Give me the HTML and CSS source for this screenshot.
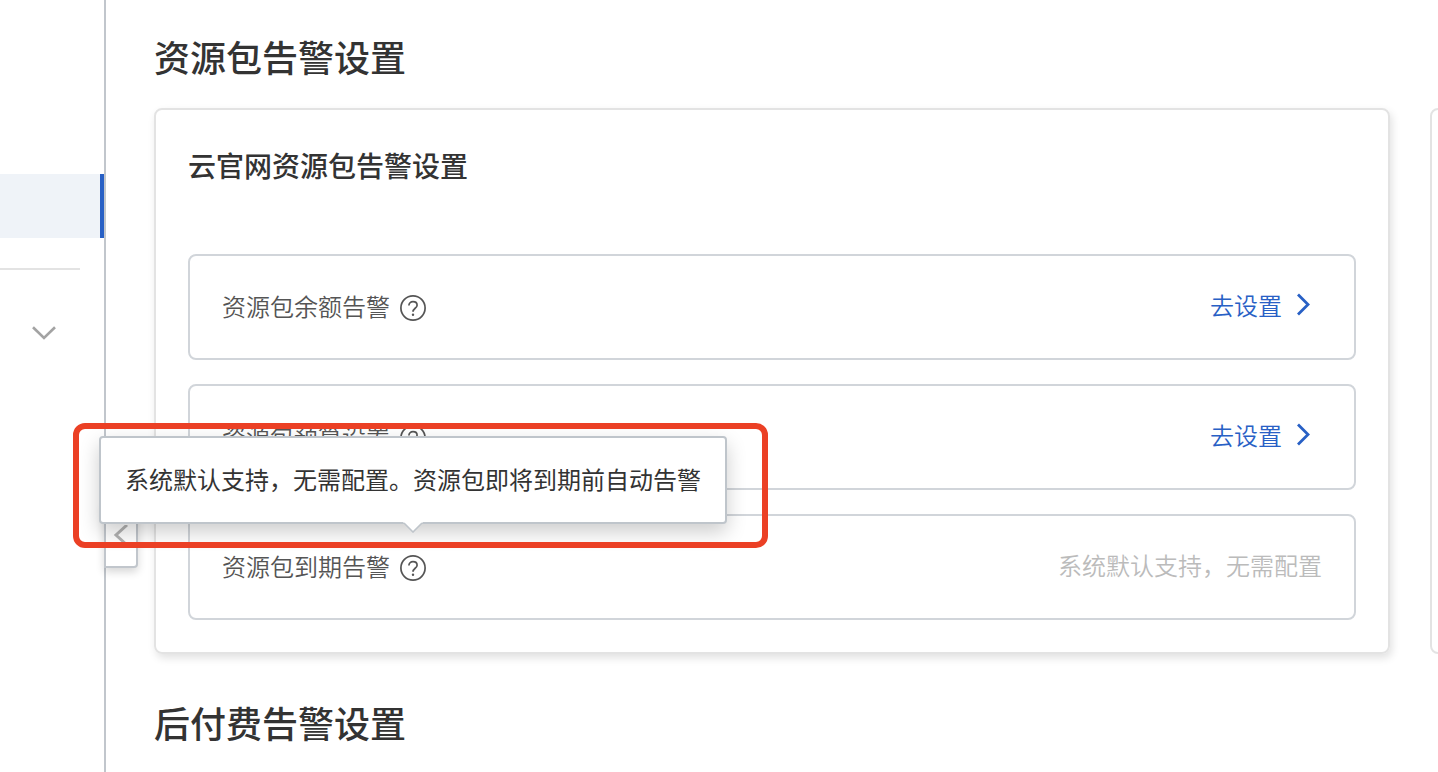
FILE: index.html
```
<!DOCTYPE html>
<html lang="zh-CN">
<head>
<meta charset="utf-8">
<meta name="viewport" content="width=device-width, initial-scale=1">
<title>资源包告警设置</title>
<link rel="stylesheet" href="styles.css">
</head>
<body>
<div class="app">
  <aside class="sidebar">
    <div class="menu-active"></div>
    <hr class="menu-divider">
    <button class="menu-toggle" type="button" aria-label="展开">
      <svg width="24" height="14" viewBox="0 0 24 14" fill="none" stroke="#a3a3a3" stroke-width="2.600"><path d="M1 1.200 12 12 23 1.200"/></svg>
    </button>
    <button class="collapse" type="button" aria-label="收起">
      <svg width="16" height="20" viewBox="0 0 16 20" fill="none" stroke="#b3b3b3" stroke-width="3"><path d="M14 0 3 10l11 10"/></svg>
    </button>
  </aside>
  <main class="main">
    <section class="section">
      <h1 class="section-title">资源包告警设置</h1>
      <div class="cards">
        <article class="card card-raised">
          <h2 class="card-title">云官网资源包告警设置</h2>
          <div class="rows">
            <div class="row">
              <span class="label">资源包余额告警</span>
              <div class="help-wrap">
                <button class="help" type="button" aria-label="帮助">
                  <svg class="help-icon" viewBox="0 0 26 26" fill="none" stroke="#555" stroke-width="1.700"><circle cx="13" cy="13" r="12.100"/><path d="M8.900 10.600c0-2.400 1.700-3.900 4.100-3.900s4.100 1.400 4.100 3.500c0 3-4.100 3.200-4.100 6.600"/><circle cx="13" cy="19.700" r="1.200" fill="#555" stroke="none"/></svg>
                </button>
              </div>
              <a class="action" href="#">去设置<svg width="32" height="24" viewBox="0 0 32 24" fill="none" stroke="#2860c5" stroke-width="2.800"><path d="M8 1.500 18 11.500 8 21.500"/></svg></a>
            </div>
            <div class="row">
              <span class="label">资源包预算设置</span>
              <div class="help-wrap">
                <button class="help" type="button" aria-label="帮助">
                  <svg class="help-icon" viewBox="0 0 26 26" fill="none" stroke="#555" stroke-width="1.700"><circle cx="13" cy="13" r="12.100"/><path d="M8.900 10.600c0-2.400 1.700-3.900 4.100-3.900s4.100 1.400 4.100 3.500c0 3-4.100 3.200-4.100 6.600"/><circle cx="13" cy="19.700" r="1.200" fill="#555" stroke="none"/></svg>
                </button>
              </div>
              <a class="action" href="#">去设置<svg width="32" height="24" viewBox="0 0 32 24" fill="none" stroke="#2860c5" stroke-width="2.800"><path d="M8 1.500 18 11.500 8 21.500"/></svg></a>
            </div>
            <div class="row">
              <span class="label">资源包到期告警</span>
              <div class="help-wrap">
                <button class="help" type="button" aria-label="帮助" aria-describedby="expire-tip">
                  <svg class="help-icon" viewBox="0 0 26 26" fill="none" stroke="#555" stroke-width="1.700"><circle cx="13" cy="13" r="12.100"/><path d="M8.900 10.600c0-2.400 1.700-3.900 4.100-3.900s4.100 1.400 4.100 3.500c0 3-4.100 3.200-4.100 6.600"/><circle cx="13" cy="19.700" r="1.200" fill="#555" stroke="none"/></svg>
                </button>
                <div class="tooltip" id="expire-tip" role="tooltip">系统默认支持，无需配置。资源包即将到期前自动告警
                  <svg class="tooltip-arrow" width="20" height="11" viewBox="0 0 20 11"><path d="M0 0h20L10 10z" fill="#fff"/><path d="M1 1 10 10 19 1" fill="none" stroke="#bfc5cb" stroke-width="1.600"/></svg>
                  <span class="highlight"></span>
                </div>
              </div>
              <span class="note">系统默认支持，无需配置</span>
            </div>
          </div>
        </article>
        <article class="card"></article>
      </div>
    </section>
    <section class="section">
      <h1 class="section-title">后付费告警设置</h1>
    </section>
  </main>
</div>
</body>
</html>
```
FILE: styles.css
```
* {
  box-sizing: border-box;
}

body {
  margin: 0;
  background: #fff;
  color: #333;
  font-family: "Noto Sans CJK SC", sans-serif;
  font-size: 24px;
  line-height: 32px;
}

button {
  padding: 0;
  border: 0;
  background: none;
}

svg {
  display: block;
}

.app {
  display: flex;
  min-height: 100vh;
  overflow: hidden;
}

.sidebar {
  position: relative;
  flex: 0 0 106px;
  padding-top: 174px;
  border-right: 2px solid #c1c6cc;
}

.menu-active {
  height: 64px;
  border-right: 4px solid #2860c5;
  background: #eff3f8;
}

.menu-divider {
  height: 2px;
  margin: 30px 24px 0 0;
  border: 0;
  background: #e3e3e3;
}

.menu-toggle {
  display: block;
  margin: 56px 0 0 32px;
}

.collapse {
  position: absolute;
  top: 502px;
  left: 100%;
  display: flex;
  align-items: center;
  justify-content: center;
  width: 34px;
  height: 66px;
  border: 2px solid #c1c6cc;
  border-radius: 0 4px 4px 0;
  background: #fff;
  box-shadow: 0 4px 8px rgba(0, 0, 0, 0.16);
  z-index: 1;
}

.main {
  flex: 1;
  min-width: 0;
  padding: 36px 0 24px 48px;
}

.section + .section {
  margin-top: 48px;
}

.section-title {
  margin: 0;
  font-size: 36px;
  font-weight: 500;
  line-height: 40px;
}

.cards {
  display: flex;
  gap: 40px;
  margin-top: 32px;
}

.card {
  flex: 0 0 calc(100% - 48px);
  padding: 40px 32px 32px;
  border: 2px solid #e3e3e3;
  border-radius: 8px;
}

.card-raised {
  box-shadow: 2px 4px 8px rgba(0, 0, 0, 0.12);
}

.card-title {
  margin: 0 0 74px;
  font-size: 28px;
  font-weight: 500;
  line-height: 30px;
}

.rows {
  display: grid;
  gap: 24px;
}

.row {
  display: flex;
  align-items: center;
  height: 106px;
  padding: 0 32px;
  border: 2px solid #d1d5da;
  border-radius: 8px;
}

.label {
  margin-right: 10px;
  padding-bottom: 2px;
  color: #555;
  font-weight: 350;
}

.help,
.help-icon {
  display: block;
  width: 26px;
  height: 26px;
}

.help-wrap {
  position: relative;
  margin-top: 2px;
}

.action,
.note {
  margin-left: auto;
  padding-bottom: 4px;
  font-weight: 350;
}

.action {
  display: flex;
  align-items: center;
  gap: 8px;
  color: #2860c5;
  text-decoration: none;
}

.note {
  color: #bbb;
}

.tooltip {
  position: absolute;
  bottom: calc(100% + 31px);
  left: 50%;
  width: max-content;
  padding: 25px 24px 27px;
  border: 2px solid #bfc5cb;
  border-radius: 4px;
  background: #fff;
  box-shadow: 0 8px 20px rgba(0, 0, 0, 0.2);
  transform: translateX(-50%);
  z-index: 2;
}

.tooltip-arrow {
  position: absolute;
  top: 100%;
  left: calc(50% - 10px);
}

.highlight {
  position: absolute;
  inset: -15px -43px -26px -28px;
  border: 6px solid #eb4025;
  border-radius: 12px;
  pointer-events: none;
}
```
